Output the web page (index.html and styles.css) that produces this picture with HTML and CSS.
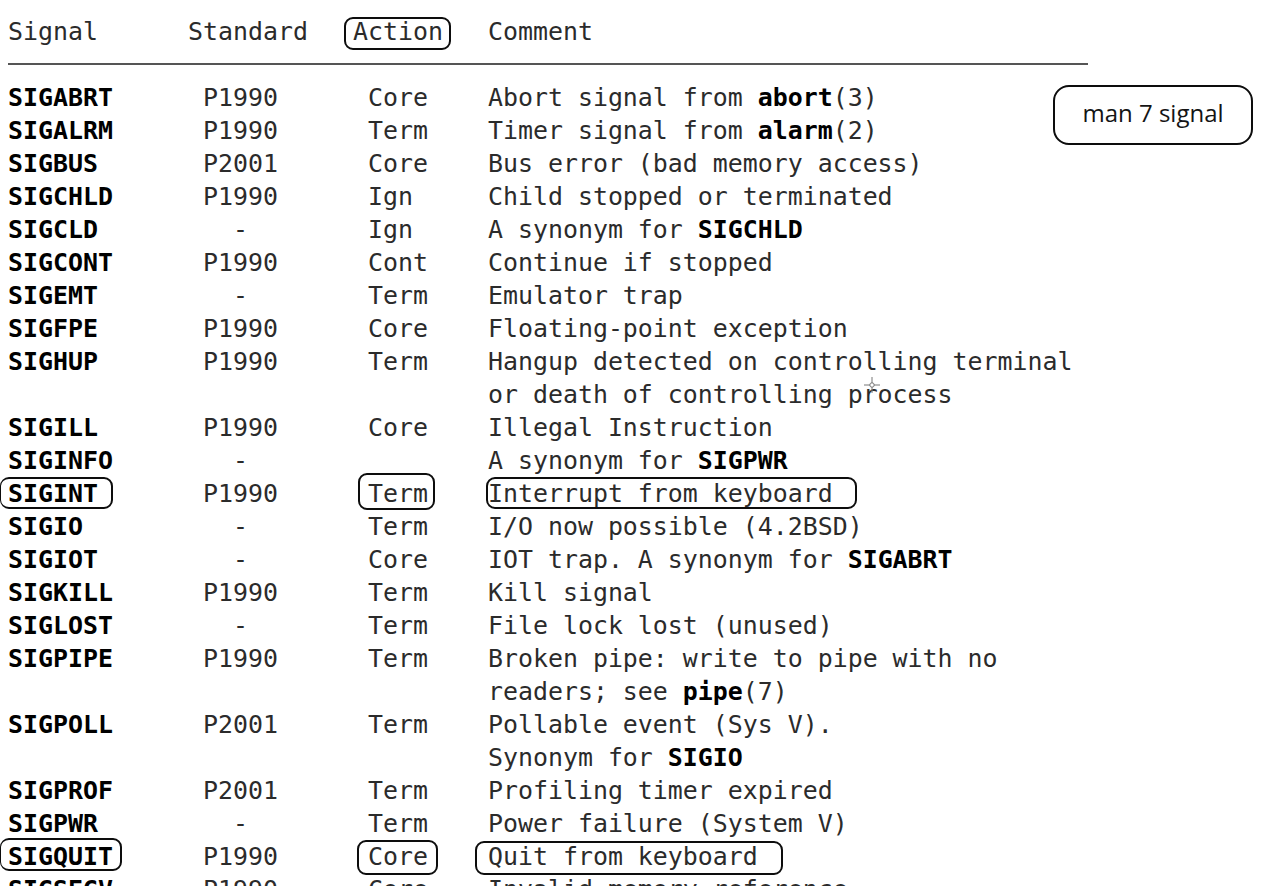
FILE: index.html
```html
<!DOCTYPE html>
<html>
<head>
<meta charset="utf-8">
<title>signal(7)</title>
<link rel="stylesheet" href="styles.css">
</head>
<body>
<div class="page">
  <div class="sigtable">
    <div class="row head"><span>Signal</span><span>Standard</span><span>Action</span><span>Comment</span></div>
    <div class="rule"></div>
    <div class="row"><b>SIGABRT</b><span class="std">P1990</span><span class="act">Core</span><span>Abort signal from <b>abort</b>(3)</span></div>
    <div class="row"><b>SIGALRM</b><span class="std">P1990</span><span class="act">Term</span><span>Timer signal from <b>alarm</b>(2)</span></div>
    <div class="row"><b>SIGBUS</b><span class="std">P2001</span><span class="act">Core</span><span>Bus error (bad memory access)</span></div>
    <div class="row"><b>SIGCHLD</b><span class="std">P1990</span><span class="act">Ign</span><span>Child stopped or terminated</span></div>
    <div class="row"><b>SIGCLD</b><span class="std none">-</span><span class="act">Ign</span><span>A synonym for <b>SIGCHLD</b></span></div>
    <div class="row"><b>SIGCONT</b><span class="std">P1990</span><span class="act">Cont</span><span>Continue if stopped</span></div>
    <div class="row"><b>SIGEMT</b><span class="std none">-</span><span class="act">Term</span><span>Emulator trap</span></div>
    <div class="row"><b>SIGFPE</b><span class="std">P1990</span><span class="act">Core</span><span>Floating-point exception</span></div>
    <div class="row"><b>SIGHUP</b><span class="std">P1990</span><span class="act">Term</span><span>Hangup detected on controlling terminal<br>or death of controlling process</span></div>
    <div class="row"><b>SIGILL</b><span class="std">P1990</span><span class="act">Core</span><span>Illegal Instruction</span></div>
    <div class="row"><b>SIGINFO</b><span class="std none">-</span><span class="act"></span><span>A synonym for <b>SIGPWR</b></span></div>
    <div class="row"><b>SIGINT</b><span class="std">P1990</span><span class="act">Term</span><span>Interrupt from keyboard</span></div>
    <div class="row"><b>SIGIO</b><span class="std none">-</span><span class="act">Term</span><span>I/O now possible (4.2BSD)</span></div>
    <div class="row"><b>SIGIOT</b><span class="std none">-</span><span class="act">Core</span><span>IOT trap. A synonym for <b>SIGABRT</b></span></div>
    <div class="row"><b>SIGKILL</b><span class="std">P1990</span><span class="act">Term</span><span>Kill signal</span></div>
    <div class="row"><b>SIGLOST</b><span class="std none">-</span><span class="act">Term</span><span>File lock lost (unused)</span></div>
    <div class="row"><b>SIGPIPE</b><span class="std">P1990</span><span class="act">Term</span><span>Broken pipe: write to pipe with no<br>readers; see <b>pipe</b>(7)</span></div>
    <div class="row"><b>SIGPOLL</b><span class="std">P2001</span><span class="act">Term</span><span>Pollable event (Sys V).<br>Synonym for <b>SIGIO</b></span></div>
    <div class="row"><b>SIGPROF</b><span class="std">P2001</span><span class="act">Term</span><span>Profiling timer expired</span></div>
    <div class="row"><b>SIGPWR</b><span class="std none">-</span><span class="act">Term</span><span>Power failure (System V)</span></div>
    <div class="row"><b>SIGQUIT</b><span class="std">P1990</span><span class="act">Core</span><span>Quit from keyboard</span></div>
    <div class="row"><b>SIGSEGV</b><span class="std">P1990</span><span class="act">Core</span><span>Invalid memory reference</span></div>
  </div>

  <div class="mark mark-action"></div>
  <div class="mark mark-sigint"></div>
  <div class="mark mark-term"></div>
  <div class="mark mark-interrupt"></div>
  <div class="mark mark-sigquit"></div>
  <div class="mark mark-core"></div>
  <div class="mark mark-quit"></div>

  <div class="note">man 7 signal</div>

  <svg class="cursor" width="16" height="16" viewBox="0 0 16 16">
    <path d="M8 0V6M8 10V16M0 8H6M10 8H16" stroke="#777" stroke-width="1" fill="none"/>
    <circle cx="8" cy="8" r="2.2" stroke="#777" stroke-width="1" fill="none"/>
  </svg>
</div>
</body>
</html>
```

FILE: styles.css
```css
html, body {
  margin: 0;
  padding: 0;
  background: #ffffff;
}

.page {
  position: relative;
  padding: 15px 0 0 8px;
  font-family: "DejaVu Sans Mono", "Liberation Mono", monospace;
  font-size: 24.9px;
  line-height: 33px;
  color: #2b2b2b;
}

.row {
  display: grid;
  grid-template-columns: 180px 165px 135px auto;
  white-space: pre;
}

.row b {
  font-weight: bold;
  color: #000;
}

.std {
  padding-left: 15px;
}

.std.none {
  padding-left: 45px;
}

.act {
  padding-left: 15px;
}

.rule {
  width: 1080px;
  height: 2px;
  background: #555555;
  margin: 15px 0 16px;
}

/* hand-drawn annotation boxes */
.mark {
  position: absolute;
  border: 2.5px solid #0d0d0d;
  border-radius: 9px;
  box-sizing: border-box;
}

.mark-action    { left: 344px; top: 17px;  width: 107px; height: 33px; }
.mark-sigint    { left: 0;     top: 477px; width: 113px; height: 32px; border-left-width: 1px; }
.mark-term      { left: 358px; top: 473px; width: 77px;  height: 37px; }
.mark-interrupt { left: 486px; top: 477px; width: 371px; height: 32px; }
.mark-sigquit   { left: 0;     top: 838px; width: 122px; height: 33px; border-left-width: 1px; }
.mark-core      { left: 357px; top: 840px; width: 81px;  height: 35px; }
.mark-quit      { left: 475px; top: 841px; width: 308px; height: 34px; }

.note {
  position: absolute;
  left: 1053px;
  top: 85px;
  width: 200px;
  height: 60px;
  box-sizing: border-box;
  border: 2.5px solid #0d0d0d;
  border-radius: 16px;
  display: flex;
  align-items: center;
  justify-content: center;
  font-family: "Open Sans", "Noto Sans", sans-serif;
  font-size: 24px;
  color: #141414;
  padding-bottom: 6px;
}

.cursor {
  position: absolute;
  left: 864px;
  top: 377px;
}
```
